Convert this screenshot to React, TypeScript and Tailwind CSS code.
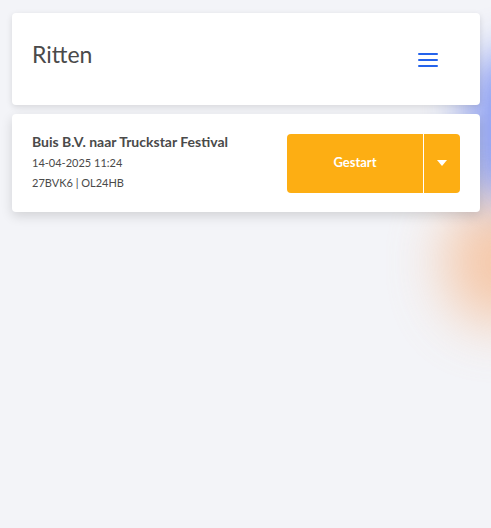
import React from "react";

export default function App() {
  return (
    <div
      className="relative min-h-[528px] w-full overflow-hidden bg-[#f3f4f8] pl-3 pr-[11px] pt-[13px]"
      style={{ fontFamily: '"Source Sans Pro", Lato, "Noto Sans", sans-serif' }}
    >
      {/* decorative blurred blobs */}
      <div className="pointer-events-none absolute left-[468px] top-[50px] h-[160px] w-[90px] rounded-full bg-[#7f93f0] opacity-90 blur-[22px]" />
      <div className="pointer-events-none absolute left-[445px] top-[200px] h-[125px] w-[110px] rounded-full bg-[#f6b98e] opacity-75 blur-[28px]" />

      <div className="relative flex flex-col gap-[9px]">
        <div className="flex h-[92px] items-center justify-between rounded-[4px] bg-white pl-5 pr-[42px] shadow-[0_2px_6px_rgba(0,0,0,0.12)]">
          <h1 className="-mt-[10px] text-[23px] text-[#4a4a4a]">Ritten</h1>
          <svg width="20" height="16" viewBox="0 0 20 16" className="mt-[1px]">
            <rect x="0" y="1" width="20" height="2" rx="1" fill="#2563eb" />
            <rect x="0" y="7" width="20" height="2" rx="1" fill="#2563eb" />
            <rect x="0" y="13" width="20" height="2" rx="1" fill="#2563eb" />
          </svg>
        </div>

        <div className="flex h-[98px] items-center justify-between rounded-[4px] bg-white pl-5 pr-5 shadow-[0_4px_12px_rgba(0,0,0,0.14)]">
          <div className="-mt-[2px] flex flex-col gap-[5px] text-[#4a4a4a]">
            <p className="text-[14px] font-bold leading-4">Buis B.V. naar Truckstar Festival</p>
            <p className="text-[11px] leading-[15px]">14-04-2025 11:24</p>
            <p className="text-[11px] leading-[15px]">27BVK6 | OL24HB</p>
          </div>
          <div className="flex h-[59px] w-[173px] overflow-hidden rounded-[4px] bg-[#fdae13]">
            <button className="flex flex-1 items-center justify-center text-[13px] font-bold text-white">
              Gestart
            </button>
            <div className="w-px bg-white" />
            <button className="flex w-[36px] items-center justify-center">
              <svg width="10" height="6" viewBox="0 0 10 6">
                <path d="M0 0h10L5 6z" fill="#ffffff" />
              </svg>
            </button>
          </div>
        </div>
      </div>
    </div>
  );
}
